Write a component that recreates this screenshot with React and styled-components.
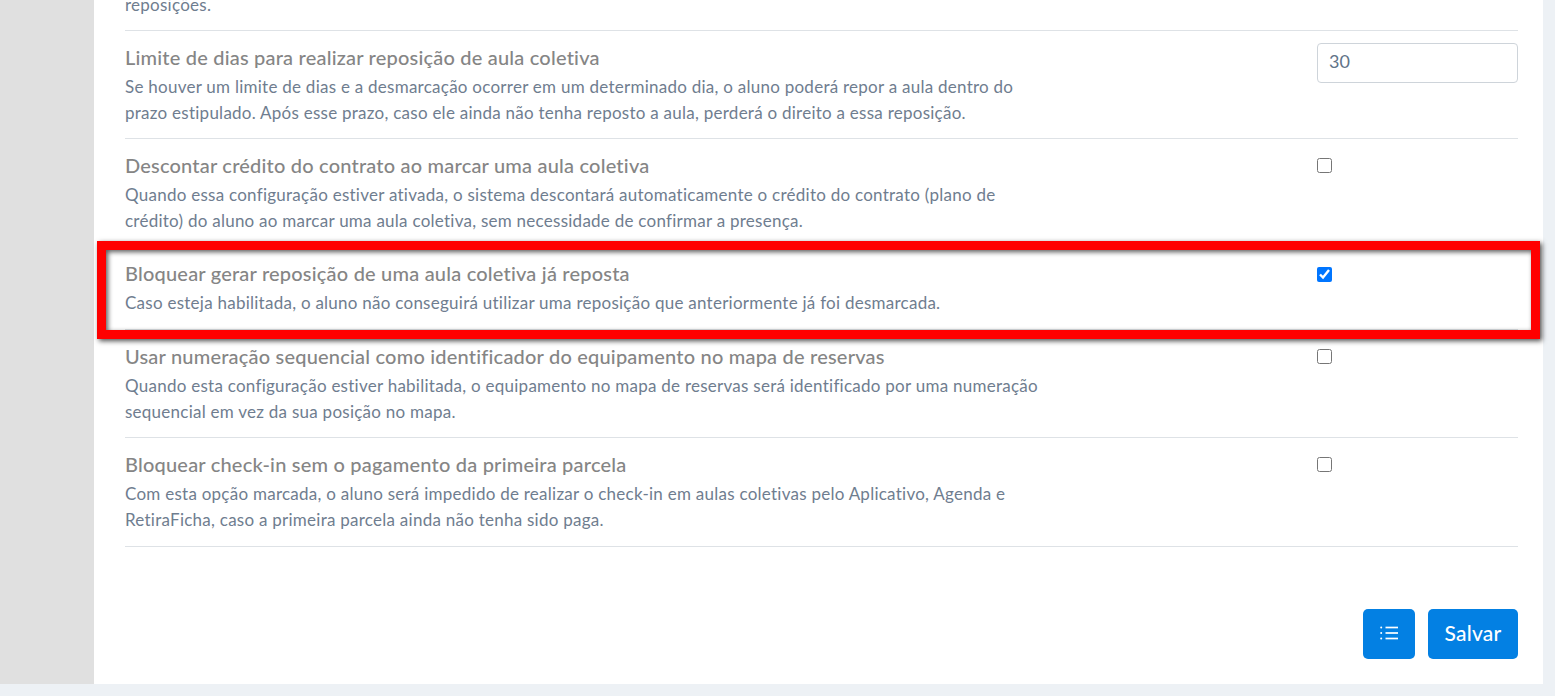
import React from 'react';
import styled, { createGlobalStyle } from 'styled-components';

const GlobalStyle = createGlobalStyle`
  html, body {
    margin: 0;
    height: 100%;
    overflow: hidden;
    background: #edf1f5;
    font-family: 'Lato', 'Open Sans', sans-serif;
  }
`;

const Page = styled.div`
  position: relative;
  display: flex;
  height: 684px;
  padding-right: 12px;
`;

const Sidebar = styled.aside`
  width: 94px;
  flex-shrink: 0;
  background: #e0e0e0;
`;

const Card = styled.main`
  flex: 1;
  background: #fff;
  padding: 0 25px 0 31px;
  overflow: hidden;
`;

const List = styled.div`
  margin-top: -8.4px;
`;

const Row = styled.section`
  display: grid;
  grid-template-columns: 1fr 201px;
  padding: ${(p) => (p.$partial ? '0 0 12px' : '13px 0 12.4px')};
  border-bottom: 1px solid #dee2e6;
`;

const Title = styled.h3`
  margin: 0 0 4px;
  font-size: 20px;
  font-weight: 500;
  letter-spacing: 0.2px;
  line-height: 26px;
  color: #858585;
`;

const Description = styled.p`
  margin: 0;
  font-size: 17px;
  font-weight: 400;
  letter-spacing: 0.255px;
  line-height: 26px;
  color: #6f7d8f;
`;

const Control = styled.div`
  padding-top: ${(p) => (p.$input ? '0' : '6.2px')};
  margin-top: ${(p) => (p.$input ? '-1px' : '0')};
`;

const NumberInput = styled.input`
  display: block;
  box-sizing: border-box;
  width: 201px;
  height: 40px;
  padding: 0 11px 4px;
  border: 1px solid #ced4da;
  border-radius: 4px;
  background: #fff;
  font: 400 18px 'Lato', sans-serif;
  color: #617388;
  outline: none;
`;

const Check = styled.input.attrs({ type: 'checkbox' })`
  display: block;
  width: 15px;
  height: 15px;
  margin: 0;
`;

const Footer = styled.footer`
  display: flex;
  justify-content: flex-end;
  gap: 13px;
  margin-top: 62.4px;
`;

const Button = styled.button`
  display: flex;
  align-items: center;
  justify-content: center;
  width: ${(p) => (p.$icon ? '52px' : '90px')};
  height: 50px;
  padding: ${(p) => (p.$icon ? '0 0 2px' : '0 0 2px')};
  border: 0;
  border-radius: 5px;
  background: #0380e3;
  color: #fff;
  font: 500 21px 'Lato', sans-serif;
  letter-spacing: 0.2px;
`;

const Highlight = styled.div`
  position: absolute;
  left: 97px;
  top: 241px;
  box-sizing: border-box;
  width: 1443px;
  height: 98px;
  border: 9px solid #ff0000;
  box-shadow: 2px 2px 5px rgba(0, 0, 0, 0.7), inset 2px 2px 5px rgba(0, 0, 0, 0.65);
  pointer-events: none;
`;

const ListIcon = () => (
  <svg width="18" height="14" viewBox="0 0 18 14" fill="none">
    <g fill="#fff">
      <circle cx="1.2" cy="1.5" r="1" />
      <circle cx="1.2" cy="7" r="1" />
      <circle cx="1.2" cy="12.5" r="1" />
    </g>
    <g stroke="#fff" strokeWidth="1.7">
      <path d="M5.5 1.5H18" />
      <path d="M5.5 7H18" />
      <path d="M5.5 12.5H18" />
    </g>
  </svg>
);

const settings = [
  {
    title: 'Limite de dias para realizar reposição de aula coletiva',
    lines: [
      'Se houver um limite de dias e a desmarcação ocorrer em um determinado dia, o aluno poderá repor a aula dentro do',
      'prazo estipulado. Após esse prazo, caso ele ainda não tenha reposto a aula, perderá o direito a essa reposição.',
    ],
    value: '30',
  },
  {
    title: 'Descontar crédito do contrato ao marcar uma aula coletiva',
    lines: [
      'Quando essa configuração estiver ativada, o sistema descontará automaticamente o crédito do contrato (plano de',
      'crédito) do aluno ao marcar uma aula coletiva, sem necessidade de confirmar a presença.',
    ],
  },
  {
    title: 'Bloquear gerar reposição de uma aula coletiva já reposta',
    lines: ['Caso esteja habilitada, o aluno não conseguirá utilizar uma reposição que anteriormente já foi desmarcada.'],
    checked: true,
  },
  {
    title: 'Usar numeração sequencial como identificador do equipamento no mapa de reservas',
    lines: [
      'Quando esta configuração estiver habilitada, o equipamento no mapa de reservas será identificado por uma numeração',
      'sequencial em vez da sua posição no mapa.',
    ],
  },
  {
    title: 'Bloquear check-in sem o pagamento da primeira parcela',
    lines: [
      'Com esta opção marcada, o aluno será impedido de realizar o check-in em aulas coletivas pelo Aplicativo, Agenda e',
      'RetiraFicha, caso a primeira parcela ainda não tenha sido paga.',
    ],
  },
];

const App = () => (
  <Page>
    <GlobalStyle />
    <Sidebar />
    <Card>
      <List>
        <Row $partial>
          <Description>reposições.</Description>
        </Row>
        {settings.map((item) => (
          <Row key={item.title}>
            <div>
              <Title>{item.title}</Title>
              {item.lines.map((line) => (
                <Description key={line}>{line}</Description>
              ))}
            </div>
            <Control $input={Boolean(item.value)}>
              {item.value ? (
                <NumberInput defaultValue={item.value} />
              ) : (
                <Check defaultChecked={item.checked} />
              )}
            </Control>
          </Row>
        ))}
      </List>
      <Footer>
        <Button $icon aria-label="Lista">
          <ListIcon />
        </Button>
        <Button>Salvar</Button>
      </Footer>
    </Card>
    <Highlight />
  </Page>
);

export default App;
